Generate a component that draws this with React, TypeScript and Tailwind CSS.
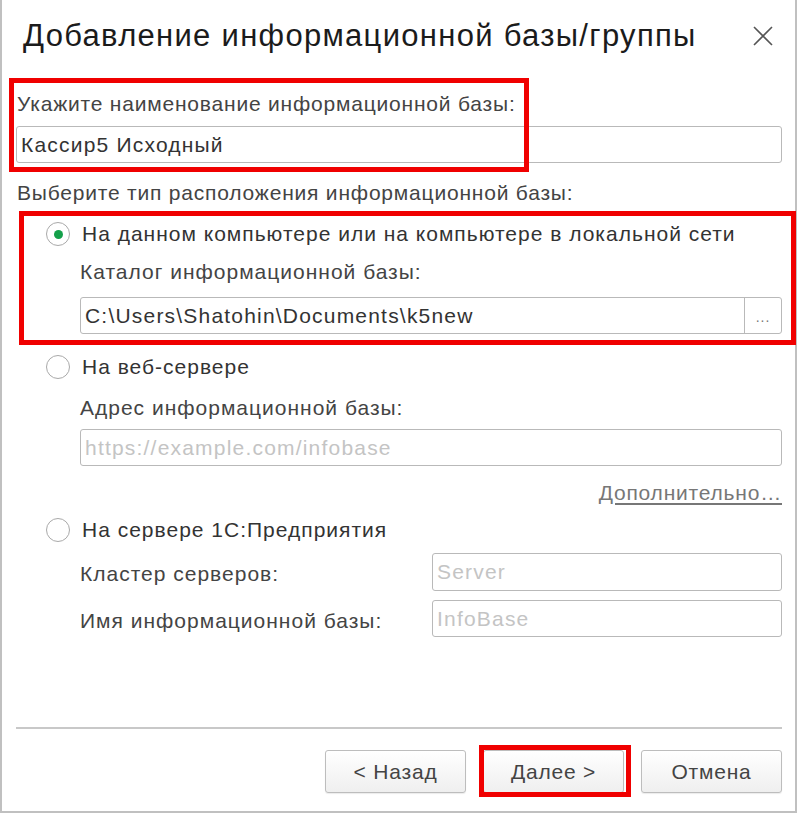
import React from 'react'

const font = { fontFamily: '"Liberation Sans", Arial, sans-serif' }

function Radio({ checked = false }: { checked?: boolean }) {
  return (
    <span className="flex h-[24px] w-[24px] shrink-0 items-center justify-center rounded-full border-[1.5px] border-[#a9a9a9] bg-white">
      {checked && <span className="h-[9px] w-[9px] rounded-full bg-[#14a04a]" />}
    </span>
  )
}

function Field({ value, placeholder, className = '' }: { value?: string; placeholder?: string; className?: string }) {
  return (
    <div className={`flex h-[37px] items-center rounded-[3px] border border-[#b9b9b9] bg-white px-[4px] text-[21px] tracking-[1.2px] ${className}`}>
      {value ? (
        <span className="text-[#333]">{value}</span>
      ) : (
        <span className="text-[#c4c4c4]">{placeholder}</span>
      )}
    </div>
  )
}

function Button({ children }: { children: React.ReactNode }) {
  return (
    <button className="flex h-[43px] w-[141px] items-center justify-center rounded-[3px] border border-[#bdbdbd] bg-gradient-to-b from-white to-[#efefef] text-[21px] tracking-[0.8px] text-[#444] shadow-[0_1px_1px_rgba(0,0,0,0.08)]">
      {children}
    </button>
  )
}

export default function App() {
  return (
    <div className="relative h-[816px] w-[800px] bg-white" style={font}>
      <div className="flex h-[813px] w-[797px] flex-col border-b-2 border-l-2 border-r-2 border-[#c0c0c0] pl-[14px] pr-[13px]">
        {/* Title */}
        <div className="mt-[17px] flex items-center justify-between">
          <h1 className="pl-[7px] text-[31px] leading-[38px] tracking-[1.3px] text-[#1b1b1b]">
            Добавление информационной базы/группы
          </h1>
          <svg width="20" height="20" viewBox="0 0 20 20" className="mr-[9px]">
            <path d="M1 1 L19 19 M19 1 L1 19" stroke="#555" strokeWidth="1.6" />
          </svg>
        </div>

        <div className="mt-[37px] pl-[1px] text-[21px] leading-[24px] tracking-[0.8px] text-[#444]">
          Укажите наименование информационной базы:
        </div>
        <Field value="Кассир5 Исходный" className="mt-[10px]" />

        <div className="mt-[18px] pl-[1px] text-[21px] leading-[24px] tracking-[0.8px] text-[#444]">
          Выберите тип расположения информационной базы:
        </div>

        {/* Local */}
        <div className="mt-[17px] flex items-center gap-[12px] pl-[30px]">
          <Radio checked />
          <span className="text-[21px] leading-[24px] tracking-[1px] text-[#333]">
            На данном компьютере или на компьютере в локальной сети
          </span>
        </div>
        <div className="pl-[64px]">
          <div className="mt-[14px] text-[21px] leading-[24px] tracking-[1px] text-[#444]">Каталог информационной базы:</div>
          <div className="mt-[13px] flex h-[37px] overflow-hidden rounded-[3px] border border-[#b9b9b9] bg-white">
            <div className="flex flex-1 items-center px-[4px] text-[21px] tracking-[1.2px] text-[#333]">
              C:\Users\Shatohin\Documents\k5new
            </div>
            <div className="flex w-[37px] items-center justify-center border-l border-[#b9b9b9] pt-[4px] text-[14px] tracking-[1px] text-[#777]">
              ...
            </div>
          </div>
        </div>

        {/* Web */}
        <div className="mt-[21px] flex items-center gap-[12px] pl-[30px]">
          <Radio />
          <span className="text-[21px] leading-[24px] tracking-[1px] text-[#333]">На веб-сервере</span>
        </div>
        <div className="pl-[64px]">
          <div className="mt-[17px] text-[21px] leading-[24px] tracking-[1px] text-[#444]">Адрес информационной базы:</div>
          <Field placeholder="https://example.com/infobase" className="mt-[9px]" />
          <div className="mt-[15px] flex justify-end">
            <span className="text-[21px] leading-[24px] tracking-[0.8px] text-[#777] underline underline-offset-[3px]">
              Дополнительно…
            </span>
          </div>
        </div>

        {/* 1C server */}
        <div className="mt-[13px] flex items-center gap-[12px] pl-[30px]">
          <Radio />
          <span className="text-[21px] leading-[24px] tracking-[1px] text-[#333]">На сервере 1С:Предприятия</span>
        </div>
        <div className="pl-[64px]">
          <div className="mt-[11px] flex items-center">
            <span className="w-[352px] pt-[4px] text-[21px] tracking-[1px] text-[#444]">Кластер серверов:</span>
            <Field placeholder="Server" className="h-[38px] flex-1" />
          </div>
          <div className="mt-[9px] flex items-center">
            <span className="w-[352px] pt-[4px] text-[21px] tracking-[1px] text-[#444]">Имя информационной базы:</span>
            <Field placeholder="InfoBase" className="flex-1" />
          </div>
        </div>

        <div className="mt-[90px] h-[2px] bg-[#c8c8c8]" />

        <div className="mt-[21px] flex justify-end gap-[17px]">
          <Button>&lt; Назад</Button>
          <Button>Далее &gt;</Button>
          <Button>Отмена</Button>
        </div>
      </div>

      {/* Red highlight frames */}
      <div className="absolute left-[9px] top-[78px] h-[94px] w-[520px] border-[5px] border-[#f00000]" />
      <div className="absolute left-[19px] top-[211px] h-[134px] w-[777px] border-[5px] border-[#f00000]" />
      <div className="absolute left-[479px] top-[745px] h-[52px] w-[152px] border-[5px] border-[#f00000]" />
    </div>
  )
}
